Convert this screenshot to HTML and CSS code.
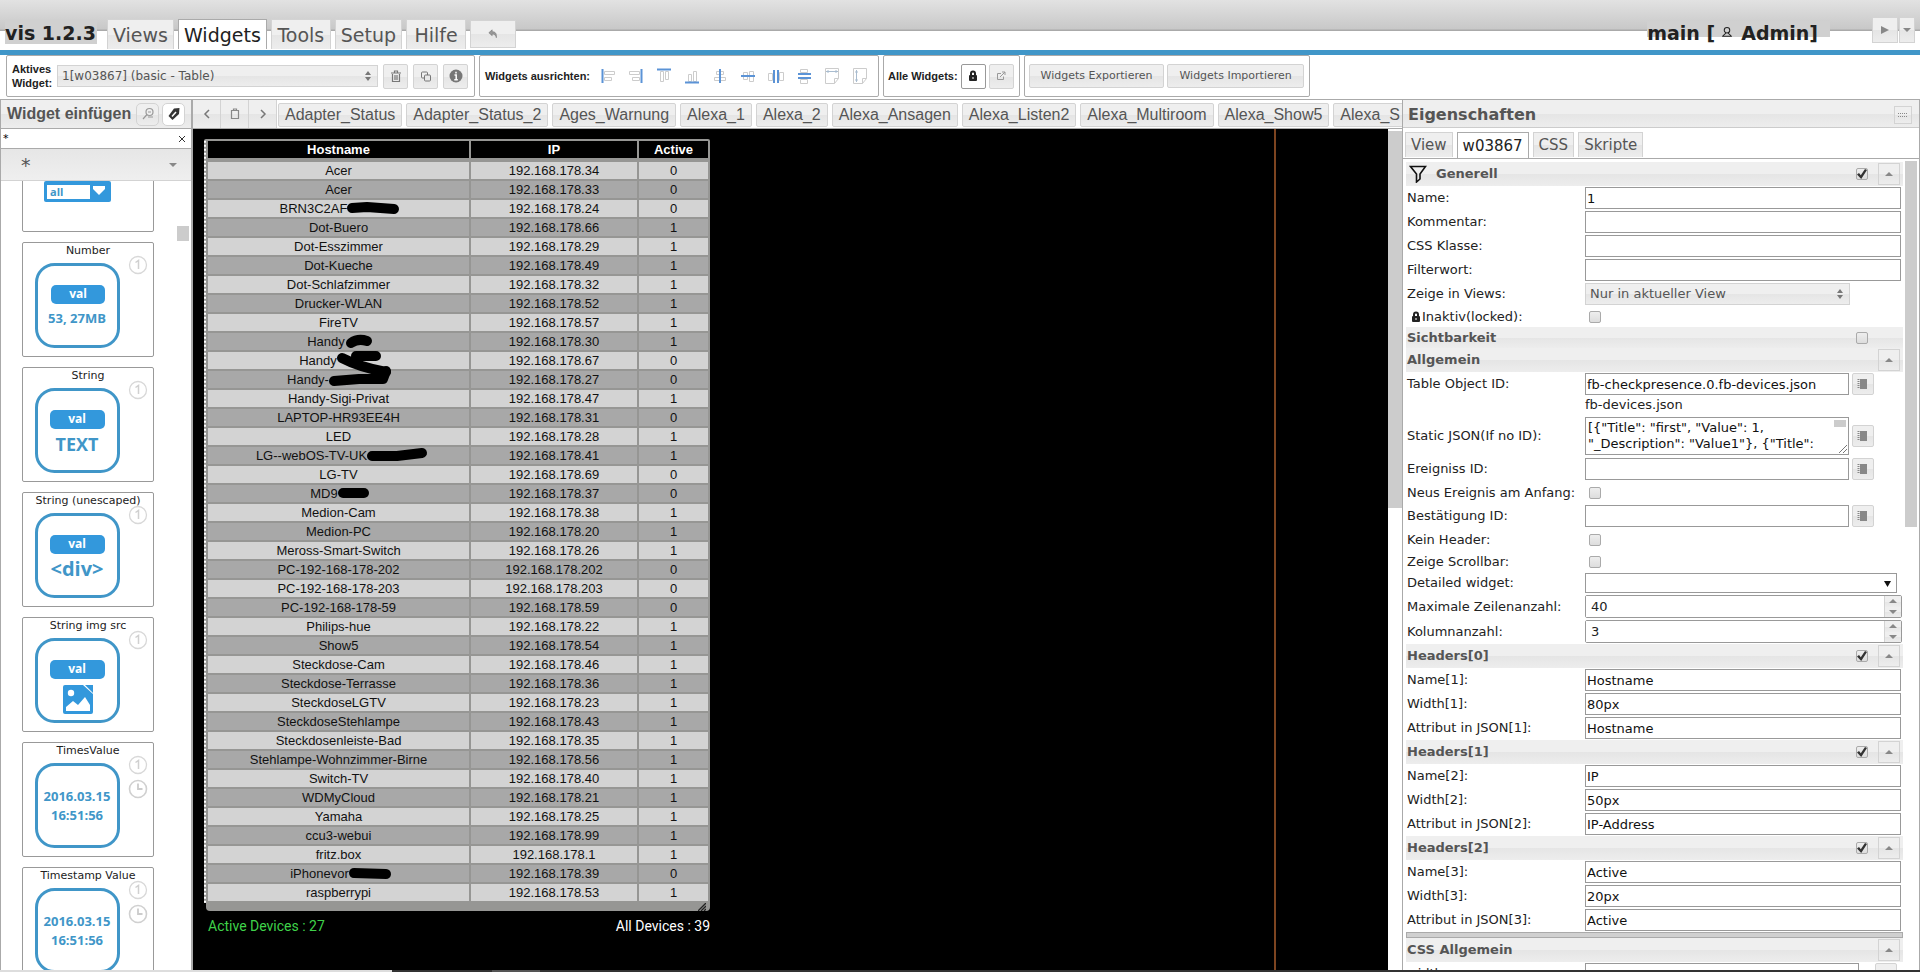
FILE: index.html
```html
<!DOCTYPE html>
<html lang="de">
<head>
<meta charset="utf-8">
<title>vis 1.2.3</title>
<link rel="stylesheet" href="styles.css">
</head>
<body>
<svg class="defs" aria-hidden="true">
  <symbol id="updown" viewBox="0 0 8 12"><path d="M4 1 7 5H1zM4 11 1 7h6z" fill="#777"/></symbol>
  <symbol id="up" viewBox="0 0 8 8"><path d="M4 2 8 6H0z" fill="#888"/></symbol>
  <symbol id="down" viewBox="0 0 8 8"><path d="M4 6 0 2h8z" fill="#888"/></symbol>
  <symbol id="book" viewBox="0 0 12 12"><path d="M3 1h7v10H3z" fill="#888"/><path d="M1.500 1v10" stroke="#888" stroke-width="2" stroke-dasharray="1 1"/></symbol>
  <symbol id="lock" viewBox="0 0 12 12"><path d="M4 6V3.500a2 2 0 0 1 4 0V6" fill="none" stroke="#222" stroke-width="2"/><rect x="2" y="5" width="8" height="6" rx="1" fill="#222"/><path d="M6 7v2" stroke="#fff"/></symbol>
  <symbol id="one" viewBox="0 0 20 20"><circle cx="10" cy="10" r="8.500" fill="none" stroke="#d8d8d8" stroke-width="1.300"/><path d="M7.500 7.500 10.500 5.500V14" fill="none" stroke="#d0d0d0" stroke-width="1.500"/></symbol>
  <symbol id="clock" viewBox="0 0 20 20"><circle cx="10" cy="10" r="8.500" fill="none" stroke="#d0d0d0" stroke-width="1.600"/><path d="M10 4.500V10h4.500" fill="none" stroke="#ccc" stroke-width="1.800"/></symbol>
</svg>

<header class="top">
  <h1 class="brand">vis 1.2.3</h1>
  <nav class="menu">
    <button class="menu-tab">Views</button>
    <button class="menu-tab active">Widgets</button>
    <button class="menu-tab">Tools</button>
    <button class="menu-tab">Setup</button>
    <button class="menu-tab">Hilfe</button>
    <button class="undo" aria-label="Undo"><svg width="10" height="10" viewBox="0 0 12 12"><path d="M1 4.500 5 1v2.300c4 0 5.500 2 5 7.200C9.500 7.500 8 6 5 6v2z" fill="#999" stroke="#777" stroke-width=".7"/></svg></button>
  </nav>
  <div class="project">main [<svg width="12" height="12" viewBox="0 0 14 14"><circle cx="7" cy="5" r="3.200" fill="none" stroke="#222" stroke-width="1.200"/><path d="M5.500 8C5 10 3 10 2 12h10c-1-2-3-2-3.500-4" fill="none" stroke="#222" stroke-width="1.200"/></svg>Admin]</div>
  <div class="run">
    <button class="play" aria-label="Start"><svg width="10" height="10" viewBox="0 0 10 10"><path d="M1 1 9 5 1 9z" fill="#888"/></svg></button>
    <button class="more" aria-label="Mehr"><svg width="8" height="8"><use href="#down"/></svg></button>
  </div>
</header>

<section class="toolbar">
  <div class="group">
    <label class="tool-label two" for="active-widget">Aktives<br>Widget:</label>
    <span class="pick wide"><select id="active-widget"><option>1[w03867] (basic - Table)</option></select><svg width="8" height="12"><use href="#updown"/></svg></span>
    <button class="sq" aria-label="Löschen"><svg width="12" height="14" viewBox="0 0 12 14"><path d="M1 4h10M4.500 3.500V2h3v1.500M2.500 5v7.500h7V5M5 6v5M7 6v5" fill="none" stroke="#777" stroke-width="1.200"/></svg></button>
    <button class="sq" aria-label="Kopieren"><svg width="12" height="14" viewBox="0 0 12 14"><rect x="1.500" y="3" width="6" height="6" rx="1" fill="none" stroke="#777"/><rect x="4.500" y="6" width="6" height="6" rx="1" fill="#e8e8e8" stroke="#777"/></svg></button>
    <button class="sq" aria-label="Info"><svg width="14" height="14" viewBox="0 0 14 14"><circle cx="7" cy="7" r="6.500" fill="#777"/><path d="M7 2.800v1.800M5.500 6h1.700v4.500M5.300 10.700h3.500" fill="none" stroke="#fff" stroke-width="1.500"/></svg></button>
  </div>
  <div class="group">
    <span class="tool-label">Widgets ausrichten:</span>
    <div class="aligns">
      <button aria-label="Links"><svg viewBox="0 0 16 16"><path d="M4.500 3.500h10v3h-10zM4.500 9.500h7v3h-7z"/><path class="b" d="M2.500 1v14"/></svg></button>
      <button aria-label="Rechts"><svg viewBox="0 0 16 16"><path d="M1.500 3.500h10v3h-10zM4.500 9.500h7v3h-7z"/><path class="b" d="M13.500 1v14"/></svg></button>
      <button aria-label="Oben"><svg viewBox="0 0 16 16"><path d="M4.500 3.500h3v10h-3zM9.500 3.500h3v8h-3z"/><path class="b" d="M1 1.500h14"/></svg></button>
      <button aria-label="Unten"><svg viewBox="0 0 16 16"><path d="M4.500 6.500h3v7h-3zM9.500 3.500h3v10h-3z"/><path class="b" d="M1 14.500h14"/></svg></button>
      <button aria-label="Mitte horizontal"><svg viewBox="0 0 16 16"><path d="M4.500 3.500h7v3h-7zM2.500 9.500h11v3h-11z"/><path class="b" d="M8 1v14"/></svg></button>
      <button aria-label="Mitte vertikal"><svg viewBox="0 0 16 16"><path d="M3.500 4.500h4v7h-4zM9.500 3.500h4v10h-4z"/><path class="b" d="M1 8h14"/></svg></button>
      <button aria-label="Verteilen horizontal"><svg viewBox="0 0 16 16"><path d="M.5 5.500h4v7h-4zM11.500 4.500h4v8h-4z"/><path class="b" d="M6 2v13M10 2v13"/></svg></button>
      <button aria-label="Verteilen vertikal"><svg viewBox="0 0 16 16"><path d="M4.500 1.500h7v3h-7zM4.500 11.500h7v4h-7z"/><path class="b" d="M2 6h13M2 10h13"/></svg></button>
      <button aria-label="Gleiche Breite"><svg viewBox="0 0 16 16"><path d="M1.500.5h13v10l-4 5h-9zM14.500 10.500h-4v5"/><path class="b thin" d="M2 3.500h12M4 2v3M12 2v3"/></svg></button>
      <button aria-label="Gleiche Höhe"><svg viewBox="0 0 16 16"><path d="M1.500.5h13v10l-4 5h-9zM14.500 10.500h-4v5"/><path class="b thin" d="M4.500 2v12M3 4h3M3 12h3"/></svg></button>
    </div>
  </div>
  <div class="group tight">
    <span class="tool-label">Alle Widgets:</span>
    <button class="sq on" aria-label="Sperren"><svg width="12" height="12"><use href="#lock"/></svg></button>
    <button class="sq" aria-label="Öffnen"><svg width="10" height="10" viewBox="0 0 10 10"><path d="M5 2.500H1.500v6h6V5.500M4 6l5-5M6 1h3v3" fill="none" stroke="#999"/></svg></button>
  </div>
  <div class="group tight">
    <button class="txt">Widgets Exportieren</button>
    <button class="txt">Widgets Importieren</button>
  </div>
</section>

<main class="work">
  <aside class="palette">
    <div class="palette-head">
      <h2>Widget einfügen</h2>
      <button aria-label="Filter"><svg width="14" height="14" viewBox="0 0 14 14"><circle cx="8.500" cy="5" r="3.500" fill="none" stroke="#999" stroke-width="1.200"/><path d="M6 7.500 2 12M7 5h3M7 10h5" fill="none" stroke="#999" stroke-width="1.200"/></svg></button>
      <button class="on" aria-label="Tag"><svg width="14" height="14" viewBox="0 0 14 14"><path d="M7 1.500 12.500 1 12 7 5.500 13 1.500 9z" fill="#333"/><path d="M5 9.500 9 5" stroke="#fff" stroke-width="1.500"/></svg></button>
    </div>
    <div class="search"><input type="text" value="*" aria-label="Suche"><button aria-label="Leeren"><svg width="8" height="8" viewBox="0 0 8 8"><path d="M1 1l6 6M7 1 1 7" stroke="#333"/></svg></button></div>
    <div class="pick set"><select aria-label="Widget-Satz"><option>*</option></select><svg width="8" height="8"><use href="#down"/></svg></div>
    <div class="scroll">
      <div class="cards">
        <div class="card"><h3></h3><div class="card-body"><svg width="85" height="85" viewBox="0 0 85 85"><rect x="9" y="28" width="67" height="21" rx="2" fill="#3398dc"/><rect x="12" y="32" width="43" height="14" fill="#fff"/><path d="M58 33h12v3l-6 6-6-6z" fill="#fff"/><text x="15" y="43" class="t10">all</text></svg></div></div>
        <div class="card"><h3>Number</h3><div class="card-body"><svg width="85" height="85" viewBox="0 0 85 85"><rect class="frame" x="1.500" y="1.500" width="82" height="82" rx="18"/><rect x="16" y="22" width="54" height="19" rx="5" fill="#3398dc"/><text x="43" y="35" class="val">val</text><text x="42" y="60">53, 27MB</text></svg><svg width="20" height="20"><use href="#one"/></svg></div></div>
        <div class="card"><h3>String</h3><div class="card-body"><svg width="85" height="85" viewBox="0 0 85 85"><rect class="frame" x="1.500" y="1.500" width="82" height="82" rx="18"/><rect x="15" y="22" width="55" height="19" rx="5" fill="#3398dc"/><text x="42" y="35" class="val">val</text><text x="42" y="63" class="t18">TEXT</text></svg><svg width="20" height="20"><use href="#one"/></svg></div></div>
        <div class="card"><h3>String (unescaped)</h3><div class="card-body"><svg width="85" height="85" viewBox="0 0 85 85"><rect class="frame" x="1.500" y="1.500" width="82" height="82" rx="18"/><rect x="15" y="22" width="55" height="19" rx="5" fill="#3398dc"/><text x="42" y="35" class="val">val</text><text x="42" y="63" class="t20">&lt;div&gt;</text></svg><svg width="20" height="20"><use href="#one"/></svg></div></div>
        <div class="card"><h3>String img src</h3><div class="card-body"><svg width="85" height="85" viewBox="0 0 85 85"><rect class="frame" x="1.500" y="1.500" width="82" height="82" rx="18"/><rect x="15" y="22" width="55" height="19" rx="5" fill="#3398dc"/><text x="42" y="35" class="val">val</text><path d="M30 47h18l10 9v18a2 2 0 0 1-2 2H30a2 2 0 0 1-2-2V49a2 2 0 0 1 2-2z" fill="#3398dc"/><path d="M50 47h8v8z" fill="#3398dc"/><circle cx="36" cy="55" r="3.200" fill="#fff"/><path d="M31 73v-4l7-6 5 4 7-8 5 8v6z" fill="#fff"/></svg><svg width="20" height="20"><use href="#one"/></svg></div></div>
        <div class="card"><h3>TimesValue</h3><div class="card-body"><svg width="85" height="85" viewBox="0 0 85 85"><rect class="frame" x="1.500" y="1.500" width="82" height="82" rx="18"/><text x="42" y="38">2016.03.15</text><text x="42" y="57">16:51:56</text></svg><div class="marks"><svg width="20" height="20"><use href="#one"/></svg><svg width="20" height="20"><use href="#clock"/></svg></div></div></div>
        <div class="card"><h3>Timestamp Value</h3><div class="card-body"><svg width="85" height="85" viewBox="0 0 85 85"><rect class="frame" x="1.500" y="1.500" width="82" height="82" rx="18"/><text x="42" y="38">2016.03.15</text><text x="42" y="57">16:51:56</text></svg><div class="marks"><svg width="20" height="20"><use href="#one"/></svg><svg width="20" height="20"><use href="#clock"/></svg></div></div></div>
      </div>
      <div class="thumb"></div>
    </div>
  </aside>

  <section class="center">
    <div class="views">
      <button class="nav" aria-label="Zurück"><svg width="12" height="12" viewBox="0 0 12 12"><path d="M8 2 4 6l4 4" fill="none" stroke="#777" stroke-width="1.500"/></svg></button>
      <button class="nav" aria-label="Liste"><svg width="12" height="12" viewBox="0 0 12 12"><path d="M2.500 2.500h7v8h-7zM4.500 2.500V1h3v1.500" fill="none" stroke="#888" stroke-width="1.200"/></svg></button>
      <button class="nav" aria-label="Weiter"><svg width="12" height="12" viewBox="0 0 12 12"><path d="M4 2l4 4-4 4" fill="none" stroke="#777" stroke-width="1.500"/></svg></button>
      <div class="view-tabs">
        <button>Adapter_Status</button><button>Adapter_Status_2</button><button>Ages_Warnung</button><button>Alexa_1</button><button>Alexa_2</button><button>Alexa_Ansagen</button><button>Alexa_Listen2</button><button>Alexa_Multiroom</button><button>Alexa_Show5</button><button>Alexa_S</button>
      </div>
    </div>
    <div class="stage">
      <div class="canvas">
        <div class="guide"></div>
        <div class="widget">
          <table class="devices">
            <colgroup><col class="c1"><col class="c2"><col class="c3"></colgroup>
            <thead><tr><th>Hostname</th><th>IP</th><th>Active</th></tr></thead>
            <tbody>
              <tr><td>Acer</td><td>192.168.178.34</td><td>0</td></tr>
              <tr><td>Acer</td><td>192.168.178.33</td><td>0</td></tr>
              <tr><td>BRN3C2AF<svg class="ink" width="50" height="14"><path d="M5 7 20 6 47 8"/></svg></td><td>192.168.178.24</td><td>0</td></tr>
              <tr><td>Dot-Buero</td><td>192.168.178.66</td><td>1</td></tr>
              <tr><td>Dot-Esszimmer</td><td>192.168.178.29</td><td>1</td></tr>
              <tr><td>Dot-Kueche</td><td>192.168.178.49</td><td>1</td></tr>
              <tr><td>Dot-Schlafzimmer</td><td>192.168.178.32</td><td>1</td></tr>
              <tr><td>Drucker-WLAN</td><td>192.168.178.52</td><td>1</td></tr>
              <tr><td>FireTV</td><td>192.168.178.57</td><td>1</td></tr>
              <tr><td>Handy<svg class="ink" width="25" height="14"><path d="M6 9Q13 4 22 7"/></svg></td><td>192.168.178.30</td><td>1</td></tr>
              <tr><td>Handy<svg class="ink" width="41" height="14"><path d="M5 5Q22 14 49 19M19 3H39"/></svg></td><td>192.168.178.67</td><td>0</td></tr>
              <tr><td>Handy-<svg class="ink" width="61" height="14"><path d="M5 9 30 7 54 7 57-1"/></svg></td><td>192.168.178.27</td><td>0</td></tr>
              <tr><td>Handy-Sigi-Privat</td><td>192.168.178.47</td><td>1</td></tr>
              <tr><td>LAPTOP-HR93EE4H</td><td>192.168.178.31</td><td>0</td></tr>
              <tr><td>LED</td><td>192.168.178.28</td><td>1</td></tr>
              <tr><td>LG--webOS-TV-UK<svg class="ink" width="54" height="14"><path d="M5 8 30 8 55 5"/></svg></td><td>192.168.178.41</td><td>1</td></tr>
              <tr><td>LG-TV</td><td>192.168.178.69</td><td>0</td></tr>
              <tr><td>MD9<svg class="ink" width="29" height="14"><path d="M5 7H26"/></svg></td><td>192.168.178.37</td><td>0</td></tr>
              <tr><td>Medion-Cam</td><td>192.168.178.38</td><td>1</td></tr>
              <tr><td>Medion-PC</td><td>192.168.178.20</td><td>1</td></tr>
              <tr><td>Meross-Smart-Switch</td><td>192.168.178.26</td><td>1</td></tr>
              <tr><td>PC-192-168-178-202</td><td>192.168.178.202</td><td>0</td></tr>
              <tr><td>PC-192-168-178-203</td><td>192.168.178.203</td><td>0</td></tr>
              <tr><td>PC-192-168-178-59</td><td>192.168.178.59</td><td>0</td></tr>
              <tr><td>Philips-hue</td><td>192.168.178.22</td><td>1</td></tr>
              <tr><td>Show5</td><td>192.168.178.54</td><td>1</td></tr>
              <tr><td>Steckdose-Cam</td><td>192.168.178.46</td><td>1</td></tr>
              <tr><td>Steckdose-Terrasse</td><td>192.168.178.36</td><td>1</td></tr>
              <tr><td>SteckdoseLGTV</td><td>192.168.178.23</td><td>1</td></tr>
              <tr><td>SteckdoseStehlampe</td><td>192.168.178.43</td><td>1</td></tr>
              <tr><td>Steckdosenleiste-Bad</td><td>192.168.178.35</td><td>1</td></tr>
              <tr><td>Stehlampe-Wohnzimmer-Birne</td><td>192.168.178.56</td><td>1</td></tr>
              <tr><td>Switch-TV</td><td>192.168.178.40</td><td>1</td></tr>
              <tr><td>WDMyCloud</td><td>192.168.178.21</td><td>1</td></tr>
              <tr><td>Yamaha</td><td>192.168.178.25</td><td>1</td></tr>
              <tr><td>ccu3-webui</td><td>192.168.178.99</td><td>1</td></tr>
              <tr><td>fritz.box</td><td>192.168.178.1</td><td>1</td></tr>
              <tr><td>iPhonevor<svg class="ink" width="38" height="14"><path d="M5 7 37 8"/></svg></td><td>192.168.178.39</td><td>0</td></tr>
              <tr><td>raspberrypi</td><td>192.168.178.53</td><td>1</td></tr>
            </tbody>
          </table>
          <div class="grip"><svg width="8" height="8" viewBox="0 0 8 8"><path d="M0 8 8 0M3 8 8 3M6 8 8 6" stroke="#222" stroke-width="1.300"/></svg></div>
          <div class="counts"><span class="green">Active Devices : 27</span><span>All Devices : 39</span></div>
        </div>
      </div>
      <div class="track"><div class="thumb"></div></div>
    </div>
  </section>

  <aside class="props">
    <div class="props-head"><h2>Eigenschaften</h2><button aria-label="Verschieben"><svg width="10" height="6" viewBox="0 0 10 6"><path d="M0 1.500h10M0 4.500h10" stroke="#888" stroke-dasharray="1 1"/></svg></button></div>
    <div class="props-tabs"><button>View</button><button class="active">w03867</button><button>CSS</button><button>Skripte</button></div>
    <div class="scroll">
      <form class="fields">
        <div class="sec"><svg class="funnel" width="18" height="18" viewBox="0 0 18 18"><path d="M1.500 1.500h15L11 9v5l-3.500 3V9z" fill="none" stroke="#111" stroke-width="1.600"/></svg><h3>Generell</h3><input type="checkbox" checked aria-label="Generell"><button type="button" aria-label="Zuklappen"><svg width="8" height="8"><use href="#up"/></svg></button></div>
        <div class="row"><label for="f1">Name:</label><input type="text" id="f1" value="1"></div>
        <div class="row"><label for="f2">Kommentar:</label><input type="text" id="f2"></div>
        <div class="row"><label for="f3">CSS Klasse:</label><input type="text" id="f3"></div>
        <div class="row"><label for="f4">Filterwort:</label><input type="text" id="f4"></div>
        <div class="row"><label for="f5">Zeige in Views:</label><span class="pick mid"><select id="f5"><option>Nur in aktueller View</option></select><svg width="8" height="12"><use href="#updown"/></svg></span></div>
        <div class="row check"><label for="f6" class="locked"><svg width="12" height="12"><use href="#lock"/></svg>Inaktiv(locked):</label><input type="checkbox" id="f6"></div>
        <div class="sec short"><h3>Sichtbarkeit</h3><input type="checkbox" aria-label="Sichtbarkeit"><span class="gap"></span></div>
        <div class="sec"><h3>Allgemein</h3><button type="button" aria-label="Zuklappen"><svg width="8" height="8"><use href="#up"/></svg></button></div>
        <div class="row"><label for="f7">Table Object ID:</label><span class="with-btn"><input type="text" id="f7" value="fb-checkpresence.0.fb-devices.json"><button type="button" aria-label="Objekt wählen"><svg width="12" height="12"><use href="#book"/></svg></button></span></div>
        <div class="row note"><span></span><span>fb-devices.json</span></div>
        <div class="row area"><label for="f8">Static JSON(If no ID):</label><span class="with-btn"><span class="area-box"><textarea id="f8" rows="2">[{"Title": "first", "Value": 1, "_Description": "Value1"}, {"Title":</textarea><span class="area-bar"><span class="area-thumb"></span><svg width="12" height="12" viewBox="0 0 12 12"><path d="M3 11l8-8M7 11l4-4" stroke="#777"/></svg></span></span><button type="button" aria-label="Bearbeiten"><svg width="12" height="12"><use href="#book"/></svg></button></span></div>
        <div class="row"><label for="f9">Ereigniss ID:</label><span class="with-btn"><input type="text" id="f9"><button type="button" aria-label="Objekt wählen"><svg width="12" height="12"><use href="#book"/></svg></button></span></div>
        <div class="row check tall"><label for="f10">Neus Ereignis am Anfang:</label><input type="checkbox" id="f10"></div>
        <div class="row"><label for="f11">Bestätigung ID:</label><span class="with-btn"><input type="text" id="f11"><button type="button" aria-label="Objekt wählen"><svg width="12" height="12"><use href="#book"/></svg></button></span></div>
        <div class="row check tall"><label for="f12">Kein Header:</label><input type="checkbox" id="f12"></div>
        <div class="row check"><label for="f13">Zeige Scrollbar:</label><input type="checkbox" id="f13"></div>
        <div class="row detail"><label for="f14">Detailed widget:</label><span class="pick plain"><select id="f14"><option></option></select><svg width="7" height="7" viewBox="0 0 8 8"><path d="M0 1h8L4 8z" fill="#111"/></svg></span></div>
        <div class="row spin"><label for="f15">Maximale Zeilenanzahl:</label><span class="spinner"><input type="text" id="f15" value="40"><span class="arrows"><button type="button" aria-label="Mehr"><svg width="8" height="8"><use href="#up"/></svg></button><button type="button" aria-label="Weniger"><svg width="8" height="8"><use href="#down"/></svg></button></span></span></div>
        <div class="row spin"><label for="f16">Kolumnanzahl:</label><span class="spinner"><input type="text" id="f16" value="3"><span class="arrows"><button type="button" aria-label="Mehr"><svg width="8" height="8"><use href="#up"/></svg></button><button type="button" aria-label="Weniger"><svg width="8" height="8"><use href="#down"/></svg></button></span></span></div>
        <div class="sec"><h3>Headers[0]</h3><input type="checkbox" checked aria-label="Headers[0]"><button type="button" aria-label="Zuklappen"><svg width="8" height="8"><use href="#up"/></svg></button></div>
        <div class="row"><label for="f17">Name[1]:</label><input type="text" id="f17" value="Hostname"></div>
        <div class="row"><label for="f18">Width[1]:</label><input type="text" id="f18" value="80px"></div>
        <div class="row"><label for="f19">Attribut in JSON[1]:</label><input type="text" id="f19" value="Hostname"></div>
        <div class="sec"><h3>Headers[1]</h3><input type="checkbox" checked aria-label="Headers[1]"><button type="button" aria-label="Zuklappen"><svg width="8" height="8"><use href="#up"/></svg></button></div>
        <div class="row"><label for="f20">Name[2]:</label><input type="text" id="f20" value="IP"></div>
        <div class="row"><label for="f21">Width[2]:</label><input type="text" id="f21" value="50px"></div>
        <div class="row"><label for="f22">Attribut in JSON[2]:</label><input type="text" id="f22" value="IP-Address"></div>
        <div class="sec"><h3>Headers[2]</h3><input type="checkbox" checked aria-label="Headers[2]"><button type="button" aria-label="Zuklappen"><svg width="8" height="8"><use href="#up"/></svg></button></div>
        <div class="row"><label for="f23">Name[3]:</label><input type="text" id="f23" value="Active"></div>
        <div class="row"><label for="f24">Width[3]:</label><input type="text" id="f24" value="20px"></div>
        <div class="row"><label for="f25">Attribut in JSON[3]:</label><input type="text" id="f25" value="Active"></div>
        <div class="divider"></div>
        <div class="sec"><h3>CSS Allgemein</h3><button type="button" aria-label="Zuklappen"><svg width="8" height="8"><use href="#up"/></svg></button></div>
        <div class="row css"><label for="f26">width:</label><span class="with-btn"><input type="text" id="f26"><button type="button" aria-label="Mehr"><svg width="8" height="8"><use href="#up"/></svg></button></span></div>
      </form>
      <div class="thumb"></div>
    </div>
  </aside>
</main>
<div class="edge"></div>
</body>
</html>
```
FILE: styles.css
```css
* { box-sizing: border-box; }
html, body { height: 100%; }
body {
  margin: 0;
  display: flex;
  flex-direction: column;
  overflow: hidden;
  background: #fff;
  color: #222;
  font: 13px/16px "DejaVu Sans", Verdana, sans-serif;
}
h1, h2, h3 { margin: 0; }
button, input, select, textarea { font: inherit; margin: 0; border-radius: 0; }
button {
  display: inline-flex;
  align-items: center;
  justify-content: center;
  padding: 0;
  color: #555;
  border: 1px solid #d3d3d3;
  background: linear-gradient(#efefef 0 50%, #e5e5e5 51%, #ededed);
}
svg { flex: none; }
.defs { position: absolute; width: 0; height: 0; }

/* top bar */
.top {
  flex: none;
  display: flex;
  height: 55px;
  padding-left: 5px;
  border-bottom: 5px solid #4096c8;
  background: linear-gradient(#e2e2e2, #c8c8c8 29px, #aaa 30px, #aaa 31px, #fff 31px);
}
.brand {
  margin-top: 19px;
  height: 25px;
  width: 92px;
  font-size: 19px;
  line-height: 28px;
  background: #d0d0d0;
}
.menu { display: flex; align-items: flex-start; gap: 4px; margin: 19px 0 0 10px; }
.menu-tab { height: 30px; min-width: 60px; padding: 0 5px; font-size: 19px; border-bottom: 0; }
.menu-tab.active { background: #fff; color: #212121; border-color: #aaa; }
.undo { width: 46px; height: 28px; margin-top: 1px; }
.project {
  display: flex;
  align-items: flex-start;
  gap: 6px;
  height: 16px;
  margin: 21px 42px 0 auto;
  padding-right: 12px;
  font-size: 19px;
  font-weight: bold;
  line-height: 24px;
  background: #d0d0d0;
  white-space: nowrap;
}
.project svg { margin: 5px 2px 0 0; }
.run { display: flex; gap: 1px; margin: 17px 5px 0 0; height: 26px; }
.play { width: 26px; }
.more { width: 16px; }

/* toolbar */
.toolbar {
  flex: none;
  display: flex;
  gap: 4px;
  height: 45px;
  padding: 0 6px;
  border-bottom: 1px solid #aaa;
}
.group {
  display: flex;
  align-items: center;
  gap: 5px;
  height: 42px;
  padding: 0 6px 0 5px;
  border: 1px solid #aaa;
  border-radius: 2px;
}
.group.tight { gap: 3px; padding: 0 5px 0 4px; }
.tool-label { font: bold 11px/14px "Liberation Sans", Arial, sans-serif; white-space: nowrap; }
.two { width: 40px; }
.sq { width: 25px; height: 25px; border-radius: 2px; }
.sq.on { background: #fff; border-color: #999; }
.txt { height: 24px; padding: 0 11px; font-size: 11px; border-radius: 2px; }
.pick { display: grid; align-items: center; }
.pick > * { grid-area: 1 / 1; }
.pick > svg { justify-self: end; margin-right: 6px; pointer-events: none; }
.pick select {
  appearance: none;
  width: 100%;
  height: 22px;
  padding: 0 4px;
  color: #555;
  border: 1px solid #d3d3d3;
  background: linear-gradient(#efefef 0 50%, #e5e5e5 51%, #ededed);
}
.wide { width: 321px; font-size: 12px; }
.aligns { display: flex; gap: 12px; padding: 0 4px 0 5px; }
.aligns button { border: 0; background: none; }
.aligns svg { width: 16px; height: 16px; }
.aligns path { fill: none; stroke: #ccc; }
.aligns .b { stroke: #5b93d6; stroke-width: 2; }
.aligns .thin { stroke: #a9bccf; stroke-width: 1; }

/* work area */
.work { flex: 1; display: flex; min-height: 0; }
.scroll { flex: 1; display: flex; min-height: 0; overflow: hidden; }
.thumb { background: #ccc; }

/* widget palette */
.palette {
  flex: none;
  display: flex;
  flex-direction: column;
  width: 193px;
  border: 1px solid #aaa;
  border-width: 0 2px 0 1px;
}
.palette-head {
  flex: none;
  display: flex;
  align-items: center;
  gap: 3px;
  height: 29px;
  padding: 0 6px;
  border-bottom: 1px solid #aaa;
  background: linear-gradient(#efefef 0 50%, #e5e5e5 51%, #ededed);
}
.palette-head h2 { flex: 1; font: bold 16px/20px "Liberation Sans", Arial, sans-serif; color: #555; white-space: nowrap; }
.palette-head button { width: 23px; height: 23px; border-radius: 5px; }
.palette-head .on { background: #fff; }
.search { flex: none; display: flex; height: 20px; border-bottom: 1px solid #aaa; }
.search input { flex: 1; min-width: 0; padding: 0 2px; border: 0; font-size: 11px; }
.search button { border: 0; background: none; width: 18px; }
.set { flex: none; height: 32px; }
.set select { height: 32px; padding-left: 20px; font-size: 19px; border-width: 0 0 1px; background: linear-gradient(#e6e6e6, #efefef); }
.set > svg { margin-right: 14px; }
.cards { flex: 1; display: flex; flex-direction: column; gap: 10px; margin: -64px 0 0 21px; }
.card { flex: none; width: 132px; height: 115px; border: 1px solid #999; border-radius: 2px; }
.card:first-child { padding-top: 30px; }
.card h3 { font-size: 11px; font-weight: normal; line-height: 15px; text-align: center; }
.card-body { display: flex; gap: 8px; padding: 5px 0 0 12px; }
.card-body > svg:nth-child(2), .marks { margin-top: -8px; }
.marks { display: flex; flex-direction: column; gap: 4px; }
.frame { fill: none; stroke: #4096c8; stroke-width: 3; }
.card text { font: bold 13px "Open Sans", sans-serif; fill: #4096c8; text-anchor: middle; }
.card .val { font-size: 12px; fill: #fff; }
.card .t10 { font-size: 11px; text-anchor: start; }
.card .t18 { font-size: 18px; }
.card .t20 { font-size: 20px; }
.palette .thumb { width: 12px; height: 15px; margin: 45px 2px 0 0; }

/* centre */
.center { flex: 1; min-width: 0; display: flex; flex-direction: column; }
.views { flex: none; display: flex; height: 29px; border-bottom: 1px solid #aaa; overflow: hidden; }
.nav { flex: none; width: 28px; height: 28px; border-width: 0 1px 0 0; }
.view-tabs { display: flex; gap: 4px; padding: 3px 0 0 1px; overflow: hidden; }
.view-tabs button { flex: none; height: 24px; padding: 0 6px; font: 16px/20px "Liberation Sans", Arial, sans-serif; border-radius: 2px; }
.stage { flex: 1; display: flex; min-height: 0; }
.canvas { position: relative; flex: 1; overflow: hidden; background: #000; }
.track { width: 14px; padding-top: 2px; }
.track .thumb { height: 377px; }
.guide { position: absolute; top: 0; bottom: 0; left: 1081px; width: 2px; background: #7d4420; }
.widget { position: absolute; top: 10px; left: 11px; width: 506px; }
.devices {
  width: 100%;
  table-layout: fixed;
  border-spacing: 2px;
  background: #969694;
  border-left: 2px dotted #fff;
  border-radius: 2px 2px 0 0;
  color: #111;
  font: 13px/17px "Liberation Sans", Arial, sans-serif;
}
.c2 { width: 166px; }
.c3 { width: 69px; }
.devices th, .devices td { height: 17px; padding: 0; text-align: center; white-space: nowrap; }
.devices th { height: 19px; color: #fff; background: #000; border-bottom: 2px solid #969694; }
.devices td { background: #a8a8a8; }
.devices tr:nth-child(odd) td { background: #d3d3d3; }
.devices thead tr:nth-child(odd) th { background: #000; }
.ink { position: relative; height: 14px; vertical-align: top; margin-top: 1px; overflow: visible; }
.ink path { fill: none; stroke: #000; stroke-width: 10; stroke-linecap: round; stroke-linejoin: round; }
.grip {
  display: flex;
  justify-content: flex-end;
  height: 8px;
  padding-right: 4px;
  margin-left: 2px;
  background: #969694;
  border-radius: 0 0 4px 4px;
}
.counts { display: flex; justify-content: space-between; padding: 7px 0 0 4px; font: 14px/16px Roboto, sans-serif; color: #fff; }
.green { color: #3fd24a; }

/* properties */
.props { flex: none; display: flex; flex-direction: column; width: 518px; border: 1px solid #aaa; border-width: 0 1px; }
.props-head {
  flex: none;
  display: flex;
  align-items: center;
  justify-content: space-between;
  height: 28px;
  padding: 3px 7px 0 5px;
  border-bottom: 1px solid #ccc;
  background: linear-gradient(#efefef 0 50%, #e5e5e5 51%, #ededed);
}
.props-head h2 { font-size: 16px; color: #555; }
.props-head button { width: 18px; height: 18px; }
.props-tabs { flex: none; display: flex; gap: 4px; height: 31px; padding: 4px 2px 0; border-bottom: 1px solid #aaa; }
.props-tabs button { height: 25px; padding: 0 5px; font-size: 15px; border-bottom: 0; }
.props-tabs .active { height: 26px; background: #fff; color: #222; border-color: #aaa; }
.props .thumb { width: 12px; height: 366px; margin: 2px 2px 0; }
.fields { flex: 1; min-width: 0; padding: 3px 0 0 3px; }
.sec {
  display: flex;
  align-items: center;
  height: 24px;
  padding: 0 3px 0 1px;
  background: linear-gradient(#efefef 0 50%, #e5e5e5 51%, #ededed);
}
.sec.short { height: 21px; }
.sec h3 { flex: 1; font-size: 13px; color: #555; }
.sec button { width: 22px; height: 22px; margin-left: 10px; }
.sec .gap { width: 32px; }
.funnel { margin: 0 9px 0 2px; }
input[type="checkbox"] {
  appearance: none;
  display: grid;
  place-items: center;
  width: 12px;
  height: 12px;
  border: 1px solid #aaa;
  border-radius: 2px;
  background: linear-gradient(#eee, #ddd);
}
input[type="checkbox"]:checked::after {
  content: "";
  width: 10px;
  height: 10px;
  background: #333;
  clip-path: polygon(0 55%, 20% 40%, 38% 62%, 80% 0, 100% 10%, 42% 100%);
}
.row { display: grid; grid-template-columns: 178px 1fr; align-items: center; height: 24px; padding: 0 2px 0 1px; white-space: nowrap; }
.row > input[type="text"], .with-btn input, .row textarea { height: 22px; padding: 0 1px; color: #111; border: 1px solid #999; background: #fff; min-width: 0; width: 100%; }
.row.check { height: 21px; }
.row.check.tall { height: 23px; }
.row.check input { margin-left: 4px; }
.row.note { height: 18px; }
.row.area { height: 43px; }
.row.detail { height: 22px; }
.row.spin { height: 25px; padding-right: 1px; }
.locked { display: flex; align-items: center; padding-left: 3px; }
.mid { width: 265px; }
.with-btn { display: flex; align-items: center; gap: 3px; padding-right: 27px; }
.with-btn button { flex: none; width: 22px; height: 22px; border-radius: 2px; }
.area-box { flex: 1; display: flex; height: 38px; border: 1px solid #999; }
.row .area-box textarea { flex: 1; height: 36px; border: 0; padding: 2px; resize: none; overflow: hidden; white-space: pre-wrap; }
.area-bar { display: flex; flex-direction: column; justify-content: space-between; align-items: flex-end; width: 16px; padding-top: 2px; }
.area-thumb { width: 12px; height: 7px; margin-right: 2px; background: #ccc; }
.plain { margin-right: 4px; }
.plain select { height: 20px; background: #fff; border-color: #999; }
.spinner { display: flex; height: 23px; border: 1px solid #999; border-radius: 2px; }
.spinner input { flex: 1; min-width: 0; padding: 0 5px; border: 0; color: #222; }
.arrows { display: flex; flex-direction: column; width: 17px; }
.arrows button { flex: 1; border-width: 0 0 0 1px; }
.divider { height: 6px; border: 1px solid #aaa; background: #d0d0d0; }
.row.css .with-btn { padding-right: 4px; gap: 16px; }
.edge { flex: none; height: 2px; background: linear-gradient(90deg, #ddd 0 392px, #333 392px 492px, #555 492px 540px, #333 540px); }
```
